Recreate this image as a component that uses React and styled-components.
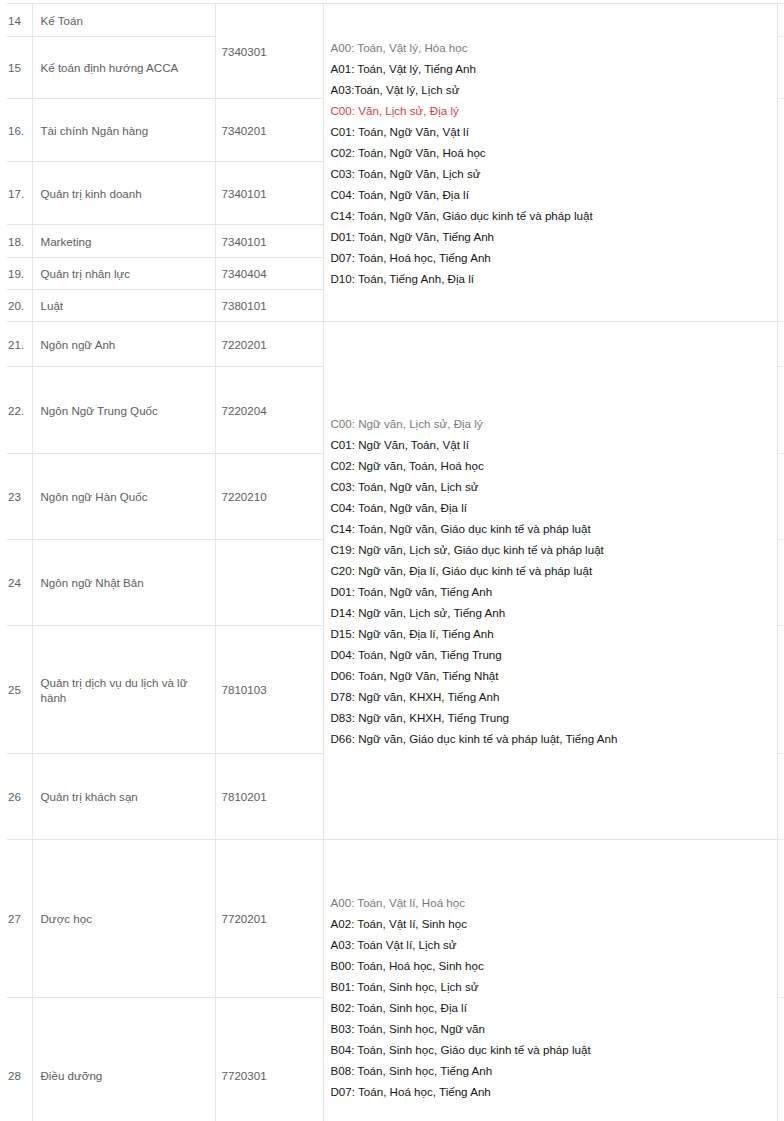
import React from "react";
import styled, { createGlobalStyle } from "styled-components";

const GlobalStyle = createGlobalStyle`
    html, body {
        margin: 0;
        padding: 0;
        background: #ffffff;
        overflow: hidden;
    }
    body {
        font-family: "Liberation Sans", Arial, Helvetica, sans-serif;
        font-size: 11.6px;
    }
`;

/* dữ liệu các ngành */
const groups = [
    {
        combos: [
            { text: "A00: Toán, Vật lý, Hóa học", tone: "muted" },
            { text: "A01: Toán, Vật lý, Tiếng Anh" },
            { text: "A03:Toán, Vật lý, Lịch sử" },
            { text: "C00: Văn, Lịch sử, Địa lý", tone: "red" },
            { text: "C01: Toán, Ngữ Văn, Vật lí" },
            { text: "C02: Toán, Ngữ Văn, Hoá học" },
            { text: "C03: Toán, Ngữ Văn, Lịch sử" },
            { text: "C04: Toán, Ngữ Văn, Địa lí" },
            { text: "C14: Toán, Ngữ Văn, Giáo dục kinh tế và pháp luật" },
            { text: "D01: Toán, Ngữ Văn, Tiếng Anh" },
            { text: "D07: Toán, Hoá học, Tiếng Anh" },
            { text: "D10: Toán, Tiếng Anh, Địa lí" },
        ],
        rows: [
            { no: "14", name: "Kế Toán", code: "7340301", codeSpan: 2, h: 33 },
            { no: "15", name: "Kế toán định hướng ACCA", h: 62 },
            { no: "16.", name: "Tài chính Ngân hàng", code: "7340201", h: 63 },
            { no: "17.", name: "Quản trị kinh doanh", code: "7340101", h: 63 },
            { no: "18.", name: "Marketing", code: "7340101", h: 33 },
            { no: "19.", name: "Quản trị nhân lực", code: "7340404", h: 32 },
            { no: "20.", name: "Luật", code: "7380101", h: 32 },
        ],
    },
    {
        combos: [
            { text: "C00: Ngữ văn, Lịch sử, Địa lý", tone: "muted" },
            { text: "C01: Ngữ Văn, Toán, Vật lí" },
            { text: "C02: Ngữ văn, Toán, Hoá học" },
            { text: "C03: Toán, Ngữ văn, Lịch sử" },
            { text: "C04: Toán, Ngữ văn, Địa lí" },
            { text: "C14: Toán, Ngữ văn, Giáo dục kinh tế và pháp luật" },
            { text: "C19: Ngữ văn, Lịch sử, Giáo dục kinh tế và pháp luật" },
            { text: "C20: Ngữ văn, Địa lí, Giáo dục kinh tế và pháp luật" },
            { text: "D01: Toán, Ngữ văn, Tiếng Anh" },
            { text: "D14: Ngữ văn, Lịch sử, Tiếng Anh" },
            { text: "D15: Ngữ văn, Địa lí, Tiếng Anh" },
            { text: "D04: Toán, Ngữ văn, Tiếng Trung" },
            { text: "D06: Toán, Ngữ Văn, Tiếng Nhật" },
            { text: "D78: Ngữ văn, KHXH, Tiếng Anh" },
            { text: "D83: Ngữ văn, KHXH, Tiếng Trung" },
            { text: "D66: Ngữ văn, Giáo dục kinh tế và pháp luật, Tiếng Anh" },
        ],
        rows: [
            { no: "21.", name: "Ngôn ngữ Anh", code: "7220201", h: 45 },
            { no: "22.", name: "Ngôn Ngữ Trung Quốc", code: "7220204", h: 87 },
            { no: "23", name: "Ngôn ngữ Hàn Quốc", code: "7220210", h: 86 },
            { no: "24", name: "Ngôn ngữ Nhật Bản", code: "", h: 86 },
            { no: "25", name: "Quản trị dịch vụ du lịch và lữ hành", code: "7810103", h: 128 },
            { no: "26", name: "Quản trị khách sạn", code: "7810201", h: 86 },
        ],
    },
    {
        combos: [
            { text: "A00: Toán, Vật lí, Hoá học", tone: "muted" },
            { text: "A02: Toán, Vật lí, Sinh học" },
            { text: "A03: Toán Vật lí, Lịch sử" },
            { text: "B00: Toán, Hoá học, Sinh học" },
            { text: "B01: Toán, Sinh học, Lịch sử" },
            { text: "B02: Toán, Sinh học, Địa lí" },
            { text: "B03: Toán, Sinh học, Ngữ văn" },
            { text: "B04: Toán, Sinh học, Giáo dục kinh tế và pháp luật" },
            { text: "B08: Toán, Sinh học, Tiếng Anh" },
            { text: "D07: Toán, Hoá học, Tiếng Anh" },
        ],
        rows: [
            { no: "27", name: "Dược học", code: "7720201", h: 158 },
            { no: "28", name: "Điều dưỡng", code: "7720301", h: 156 },
        ],
    },
];

/* độ rộng các cột */
const colWidths = [25, 183, 108, 454, 40];

const Admissions = () => {
    return (
        <Table>
            <colgroup>
                {colWidths.map((w, i) => (
                    <Col key={i} $w={w} />
                ))}
            </colgroup>
            <tbody>
                {groups.map((g, gi) =>
                    g.rows.map((r, ri) => (
                        <Row key={r.no} $h={r.h}>
                            <NumCell>{r.no}</NumCell>
                            <NameCell>{r.name}</NameCell>
                            {r.code !== undefined && (
                                <CodeCell rowSpan={r.codeSpan || 1}>{r.code}</CodeCell>
                            )}
                            {ri === 0 && (
                                <ComboCell rowSpan={g.rows.length}>
                                    {g.combos.map((c) => (
                                        <Line key={c.text} $tone={c.tone}>{c.text}</Line>
                                    ))}
                                </ComboCell>
                            )}
                            {!(gi === 0 && ri > 2) && (
                                <EdgeCell rowSpan={gi === 0 && ri === 2 ? 5 : 1} />
                            )}
                        </Row>
                    ))
                )}
            </tbody>
        </Table>
    );
};

const App = () => (
    <>
        <GlobalStyle />
        <Admissions />
    </>
);

/* bảng */
const Table = styled.table`
    margin: 3px 0 0 7px;
    border-collapse: collapse;
    table-layout: fixed;
    width: 810px;
`;

const Col = styled.col`
    width: ${(p) => p.$w}px;
`;

const Row = styled.tr`
    height: ${(p) => p.$h}px;
`;

const Cell = styled.td`
    border: 1px solid #e6e6e6;
    vertical-align: middle;
    color: #5e5e5e;
    line-height: 15px;
    padding: 0 8px;
`;

const NumCell = styled(Cell)`
    border-left: none;
    padding: 0 0 0 1px;
`;

const NameCell = styled(Cell)`
    padding: 0 8px;
`;

const CodeCell = styled(Cell)`
    padding: 0 6px;
`;

const ComboCell = styled(Cell)`
    padding: 0 7px;
    border-color: #e2e2e2;
`;

const EdgeCell = styled(Cell)`
    padding: 0;
    border-color: #ececec;
`;

const Line = styled.div`
    line-height: 21px;
    white-space: nowrap;
    color: ${(p) =>
        p.$tone === "red" ? "#dd3a3f" : p.$tone === "muted" ? "#7a7a7a" : "#151515"};
`;

export default App;
